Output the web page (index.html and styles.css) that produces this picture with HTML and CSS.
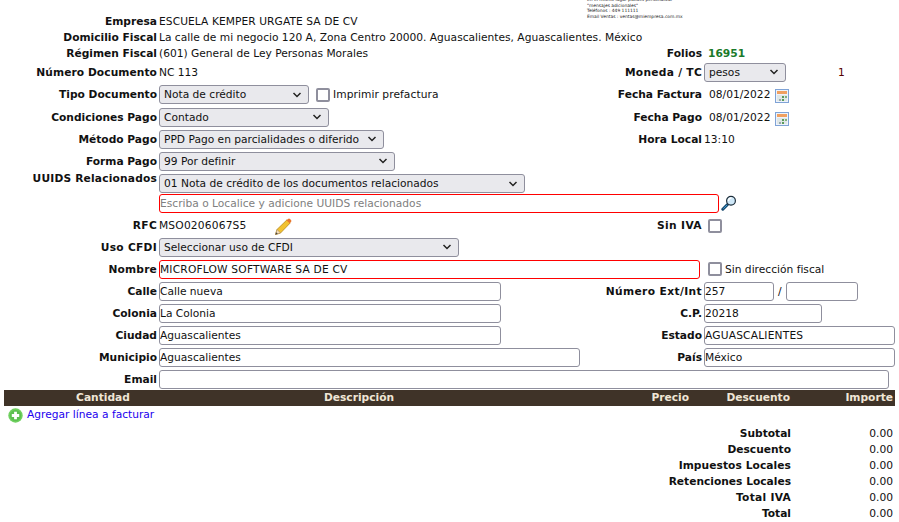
FILE: index.html
```html
<!DOCTYPE html>
<html lang="es">
<head>
<meta charset="utf-8">
<title>Factura</title>
<link rel="stylesheet" href="styles.css">
</head>
<body>
<div class="page">
  <div class="logo">
    <div>En el mismo lugar puedes personalizar</div>
    <div>"mensajes adicionales"</div>
    <div>Teléfonos : 449 111111</div>
    <div>Email Ventas : ventas@miempresa.com.mx</div>
  </div>
  <form class="form">
    <div class="row h16"><span class="lab">Empresa</span><span class="wide ls1">ESCUELA KEMPER URGATE SA DE CV</span></div>
    <div class="row h16"><span class="lab">Domicilio Fiscal</span><span class="wide">La calle de mi negocio 120 A, Zona Centro 20000. Aguascalientes, Aguascalientes. México</span></div>
    <div class="row h16"><span class="lab">Régimen Fiscal</span><span class="cell">(601) General de Ley Personas Morales</span><span class="rlab">Folios</span><span class="folio">16951</span></div>
    <div class="row h22"><span class="lab ls1">Número Documento</span><span class="cell">NC 113</span><span class="rlab ls3">Moneda / TC</span><select class="ctl w82"><option>pesos</option></select><span class="tc">1</span></div>
    <div class="row h23"><span class="lab">Tipo Documento</span><span class="cell"><select class="ctl w150"><option>Nota de crédito</option></select><label class="chk ls1"><input type="checkbox">Imprimir prefactura</label></span><span class="rlab">Fecha Factura</span><span class="date">08/01/2022</span>
      <svg class="cal" viewBox="0 0 14 14"><rect x=".5" y=".5" width="13" height="13" fill="#eef3fb" stroke="#7fa3d6"/><rect x="2" y="2" width="10" height="3" fill="#f0a060"/><rect x="2" y="6" width="10" height="6" fill="#dfe6e6"/><rect x="7" y="7" width="2" height="2" fill="#5a9a5a"/><rect x="10" y="7" width="2" height="2" fill="#7fb07f"/><rect x="4" y="10" width="2" height="2" fill="#9aa"/><rect x="7" y="10" width="2" height="2" fill="#5a9a5a"/></svg></div>
    <div class="row h22"><span class="lab">Condiciones Pago</span><span class="cell"><select class="ctl w170"><option>Contado</option></select></span><span class="rlab">Fecha Pago</span><span class="date">08/01/2022</span>
      <svg class="cal" viewBox="0 0 14 14"><rect x=".5" y=".5" width="13" height="13" fill="#eef3fb" stroke="#7fa3d6"/><rect x="2" y="2" width="10" height="3" fill="#f0a060"/><rect x="2" y="6" width="10" height="6" fill="#dfe6e6"/><rect x="7" y="7" width="2" height="2" fill="#5a9a5a"/><rect x="10" y="7" width="2" height="2" fill="#7fb07f"/><rect x="4" y="10" width="2" height="2" fill="#9aa"/><rect x="7" y="10" width="2" height="2" fill="#5a9a5a"/></svg></div>
    <div class="row h22"><span class="lab">Método Pago</span><span class="cell"><select class="ctl w225"><option>PPD Pago en parcialidades o diferido</option></select></span><span class="rlab">Hora Local</span><span>13:10</span></div>
    <div class="row h22"><span class="lab">Forma Pago</span><span class="cell"><select class="ctl w236"><option>99 Por definir</option></select></span></div>
    <div class="row h21 top"><span class="lab ls2">UUIDS Relacionados</span><select class="ctl w366"><option>01 Nota de crédito de los documentos relacionados</option></select></div>
    <div class="row h20"><span class="lab"></span><input class="ctl req w560" placeholder="Escriba o Localice y adicione UUIDS relacionados">
      <svg class="lens" viewBox="0 0 16 16"><path d="M6.5 9.5 1.8 14.2" stroke="#17496e" stroke-width="3" stroke-linecap="round"/><path d="M6 10 2.3 13.7" stroke="#3a9ad0" stroke-width="1"/><circle cx="10" cy="5.8" r="4.4" fill="#cfe8f8" stroke="#1d2d3a" stroke-width="1.2"/><path d="M7.5 6a2.8 2.8 0 0 1 3-3" stroke="#fff" stroke-width="1.4" fill="none"/></svg></div>
    <div class="row h23 rfcrow"><span class="lab ls3">RFC</span><span class="cell rfc"><span class="ls2">MSO0206067S5</span>
      <svg class="pencil" viewBox="0 0 18 18"><path d="M1.5 16.5 3 11.5 13 1.8 16.2 5 6.5 15Z" fill="#f2c230" stroke="#b98a1a" stroke-width=".8"/><path d="M1.5 16.5 3 11.5 6.5 15Z" fill="#f3dcb8" stroke="#a8895a" stroke-width=".6"/><path d="M1.5 16.5 2.2 14.2 3.8 15.8Z" fill="#444"/><path d="M12.5 2.3 14 .9a1.5 1.5 0 0 1 2 0l1 1a1.5 1.5 0 0 1 0 2l-1.400 1.400Z" fill="#e8772e"/></svg></span><span class="rlab ls4">Sin IVA</span><input class="box iva" type="checkbox"></div>
    <div class="row h22"><span class="lab ls3">Uso CFDI</span><select class="ctl w300"><option>Seleccionar uso de CFDI</option></select></div>
    <div class="row h22"><span class="lab ls2">Nombre</span><input class="ctl req w541 ls2" value="MICROFLOW SOFTWARE SA DE CV"><label class="chk nom"><input type="checkbox">Sin dirección fiscal</label></div>
    <div class="row h22"><span class="lab">Calle</span><span class="cell"><input class="ctl w342" value="Calle nueva"></span><span class="rlab ls4">Número Ext/Int</span><input class="ctl w70" value="257"><span class="slash">/</span><input class="ctl w72"></div>
    <div class="row h22"><span class="lab">Colonia</span><span class="cell"><input class="ctl w342" value="La Colonia"></span><span class="rlab">C.P.</span><input class="ctl w118" value="20218"></div>
    <div class="row h22"><span class="lab">Ciudad</span><span class="cell"><input class="ctl w342" value="Aguascalientes"></span><span class="rlab">Estado</span><input class="ctl w191 ls2" value="AGUASCALIENTES"></div>
    <div class="row h22"><span class="lab">Municipio</span><span class="cell"><input class="ctl w421" value="Aguascalientes"></span><span class="rlab">País</span><input class="ctl w191" value="México"></div>
    <div class="row h22"><span class="lab">Email</span><input class="ctl w730"></div>
  </form>
  <div class="thead"><span class="c">Cantidad</span><span class="c">Descripción</span><span class="r">Precio</span><span class="r">Descuento</span><span class="r">Importe</span></div>
  <a class="add" href="#">
    <svg class="plus" viewBox="0 0 15 15"><circle cx="7.500" cy="7.500" r="7.200" fill="#6fd05f"/><circle cx="7.500" cy="7.500" r="5.600" fill="#5cbf50"/><path d="M7.500 3.800v7.400M3.800 7.500h7.400" stroke="#fff" stroke-width="2.800"/></svg>Agregar línea a facturar</a>
  <div class="totals">
    <span class="tl">Subtotal</span><span class="tv">0.00</span>
    <span class="tl">Descuento</span><span class="tv">0.00</span>
    <span class="tl ls1">Impuestos Locales</span><span class="tv">0.00</span>
    <span class="tl">Retenciones Locales</span><span class="tv">0.00</span>
    <span class="tl ls3">Total IVA</span><span class="tv">0.00</span>
    <span class="tl">Total</span><span class="tv">0.00</span>
  </div>
</div>
</body>
</html>
```
FILE: styles.css
```css
html, body { margin: 0; padding: 0; background: #fff; }
body { overflow: hidden; }
.page { width: 899px; height: 522px; padding-left: 4px; box-sizing: border-box; font: 8pt "DejaVu Sans", sans-serif; color: #111; overflow: hidden; }
.logo { height: 13px; margin-left: 583px; font-size: 4.400px; line-height: 5.500px; color: #222; white-space: nowrap; transform: translateY(-3px); }
.row { display: flex; align-items: center; white-space: nowrap; }
.row.top { align-items: flex-start; }
.h16 { height: 16px; }
.h20 { height: 20px; }
.h21 { height: 21px; }
.h22 { height: 22px; }
.h23 { height: 23px; }
.rfcrow { box-sizing: border-box; padding-top: 2px; }
.ls1 { letter-spacing: .07px; }
.ls2 { letter-spacing: .18px; }
.ls3 { letter-spacing: .28px; }
.ls4 { letter-spacing: .38px; }
.lab { width: 153px; margin-right: 2px; flex: none; text-align: right; font-weight: bold; }
.top .ctl { margin-top: 2px; }
.cell { width: 441px; flex: none; display: flex; align-items: center; }
.rlab { width: 102px; margin-right: 2px; flex: none; text-align: right; font-weight: bold; }
.folio { font-weight: bold; color: #1a7a2a; margin-left: 4px; }
.tc { margin-left: 52px; color: #500; }
.date { margin-left: 5px; margin-right: 5px; }
.ctl { box-sizing: border-box; height: 19px; margin: 0; font: 8pt "DejaVu Sans", sans-serif; color: #111; border: 1px solid #8f8f9d; border-radius: 3px; background: #fff; padding: 0; outline: none; }
select.ctl { appearance: none; -webkit-appearance: none; padding-left: 4px; background: #e9e9ed url("data:image/svg+xml,%3Csvg xmlns='http://www.w3.org/2000/svg' width='10' height='6'%3E%3Cpath d='M1.500 1 5 4.500 8.500 1' fill='none' stroke='%23222' stroke-width='1.500'/%3E%3C/svg%3E") no-repeat right 6px center; }
.req { border-color: #f00; }
.req::placeholder { color: #808080; opacity: 1; }
.w70 { width: 70px; }
.w72 { width: 72px; }
.w82 { width: 82px; }
.w118 { width: 118px; }
.w150 { width: 150px; }
.w170 { width: 170px; }
.w191 { width: 191px; }
.w225 { width: 225px; }
.w236 { width: 236px; }
.w300 { width: 300px; }
.w342 { width: 342px; }
.w366 { width: 366px; }
.w421 { width: 421px; }
.w541 { width: 541px; }
.w560 { width: 560px; }
.w730 { width: 730px; }
.chk { display: flex; align-items: center; margin-left: 7px; }
.chk input, .box { appearance: none; -webkit-appearance: none; box-sizing: border-box; width: 14px; height: 14px; margin: 0 3px 0 0; border: 2px solid #8f8f9d; border-radius: 2px; background: #fff; }
.iva { margin-left: 4px; }
.nom { margin-left: 8px; }
.cal { width: 14px; height: 14px; flex: none; margin-top: 3px; }
.lens { width: 16px; height: 16px; margin-left: 2px; flex: none; }
.rfc { gap: 27px; }
.pencil { width: 18px; height: 18px; flex: none; margin-top: 2px; }
.slash { margin: 0 4px; }
.thead { display: grid; grid-template-columns: 198px 314px 173px 101px 103px; width: 891px; height: 16px; background: #3f3328; color: #f0e6d6; font-weight: bold; line-height: 16px; }
.c { text-align: center; }
.r { text-align: right; }
.add { display: flex; align-items: center; height: 15px; margin-top: 1px; color: #2200ee; text-decoration: none; }
.plus { width: 15px; height: 15px; margin: 2px 4px 0 4px; flex: none; }
.totals { display: grid; grid-template-columns: 787px 102px; grid-auto-rows: 16px; line-height: 16px; margin-top: 4px; }
.tl { text-align: right; font-weight: bold; }
.tv { text-align: right; }
```
